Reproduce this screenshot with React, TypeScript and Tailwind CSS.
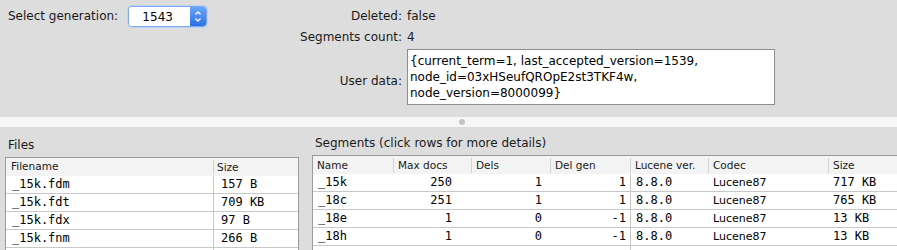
import React from "react";

const files = [
  ["_15k.fdm", "157 B"],
  ["_15k.fdt", "709 KB"],
  ["_15k.fdx", "97 B"],
  ["_15k.fnm", "266 B"],
  ["", ""],
];

const segments = [
  ["_15k", "250", "1", "1", "8.8.0", "Lucene87", "717 KB"],
  ["_18c", "251", "1", "1", "8.8.0", "Lucene87", "765 KB"],
  ["_18e", "1", "0", "-1", "8.8.0", "Lucene87", "13 KB"],
  ["_18h", "1", "0", "-1", "8.8.0", "Lucene87", "13 KB"],
  ["", "", "", "", "", "", ""],
];

const segCols = [
  { label: "Name", w: "w-[80px]" },
  { label: "Max docs", w: "w-[78px]" },
  { label: "Dels", w: "w-[79px]" },
  { label: "Del gen", w: "w-[80px]" },
  { label: "Lucene ver.", w: "w-[78px]" },
  { label: "Codec", w: "w-[120px]" },
  { label: "Size", w: "w-[80px]" },
];

function Spinner() {
  return (
    <div className="flex h-[21px] w-[79px] overflow-hidden rounded-[4px] border border-[#7fa9ea] shadow-[0_0_0_1px_#b9d2f5]">
      <div className="flex flex-1 items-center justify-center bg-white pr-1 text-[12px] text-black">1543</div>
      <div className="flex w-[16px] flex-col items-center justify-center bg-gradient-to-b from-[#6aa6fa] to-[#2b6fe6]">
        <svg width="8" height="13" viewBox="0 0 8 13" fill="none" stroke="white" strokeWidth="1.3">
          <path d="M1.5 4.5 L4 2 L6.5 4.5" />
          <path d="M1.5 8.5 L4 11 L6.5 8.5" />
        </svg>
      </div>
    </div>
  );
}

export default function App() {
  return (
    <div className="h-[250px] w-[897px] overflow-hidden bg-[#dddddd] font-['DejaVu_Sans',sans-serif] text-[12px] text-[#1a1a1a]">
      {/* Top: commit info */}
      <div className="flex h-[117px]">
        <div className="flex w-[220px] items-start gap-[10px] pl-2 pt-[6px]">
          <span className="leading-[21px]">Select generation:</span>
          <Spinner />
        </div>
        <div className="grid grid-cols-[182px_auto] content-start gap-x-[5px] pt-[8px]">
          <span className="h-4 text-right leading-4">Deleted:</span>
          <span className="h-4 leading-4">false</span>
          <span className="mt-[5px] h-4 text-right leading-4">Segments count:</span>
          <span className="mt-[5px] h-4 leading-4">4</span>
          <span className="mt-[4px] self-center pt-[8px] text-right leading-4">User data:</span>
          <div className="mt-[4px] h-[56px] w-[368px] border border-[#8e8e8e] bg-white px-[2px] pt-[3px] leading-4 text-black">
            <div>{"{current_term=1, last_accepted_version=1539,"}</div>
            <div>node_id=03xHSeufQROpE2st3TKF4w,</div>
            <div>node_version=8000099{"}"}</div>
          </div>
        </div>
      </div>

      {/* Split divider */}
      <div className="flex h-[10px] items-center bg-[#f6f6f6] pl-[459px]">
        <div className="h-[6px] w-[6px] rounded-full bg-[#c4c4c4]" />
      </div>

      {/* Bottom: files + segments */}
      <div className="flex">
        <div className="w-[312px] shrink-0 pl-[5px]">
          <div className="pb-[4px] pl-[3px] pt-[10px] leading-4">Files</div>
          <div className="w-[294px] border border-[#9c9c9c] bg-white">
            <div className="flex h-[18px] items-center bg-[#f3f3f3] text-[10.5px]">
              <div className="w-[207px] pl-[5px]">Filename</div>
              <div className="h-[15px] border-l border-[#d2d2d2] pl-[3px] leading-[15px]">Size</div>
            </div>
            {files.map(([name, size], i) => (
              <div key={i} className="flex h-[18px] border-b border-[#c8c8c8] font-['DejaVu_Sans_Mono',monospace] text-[12px] leading-[17px] text-black">
                <div className="w-[207px] pl-[6px]">{name}</div>
                <div className="flex-1 border-l border-[#c8c8c8] pl-[7px]">{size}</div>
              </div>
            ))}
          </div>
        </div>

        <div className="min-w-0 flex-1 overflow-hidden">
          <div className="pb-[4px] pl-[3px] pt-[8px] leading-4">Segments (click rows for more details)</div>
          <div className="w-[600px] border border-[#9c9c9c] bg-white">
            <div className="flex h-[18px] items-center bg-[#f3f3f3] text-[10.5px]">
              {segCols.map((c, i) => (
                <div key={c.label} className={`${c.w} h-[15px] leading-[15px] ${i > 0 ? "border-l border-[#d2d2d2] pl-[4px]" : "pl-[4px]"}`}>
                  {c.label}
                </div>
              ))}
            </div>
            {segments.map((r, i) => (
              <div key={i} className="flex h-[18px] border-b border-[#c8c8c8] font-['DejaVu_Sans_Mono',monospace] text-[12px] leading-[17px] text-black">
                <div className="w-[80px] pl-[5px]">{r[0]}</div>
                <div className="w-[78px] pr-[19px] text-right">{r[1]}</div>
                <div className="w-[79px] pr-[8px] text-right">{r[2]}</div>
                <div className="w-[80px] pr-[4px] text-right">{r[3]}</div>
                <div className="w-[78px] border-l border-[#c8c8c8] pl-[5px]">{r[4]}</div>
                <div className="w-[120px] pl-[5px] font-['DejaVu_Sans',sans-serif] text-[11px]">{r[5]}</div>
                <div className="w-[80px] pl-[5px]">{r[6]}</div>
              </div>
            ))}
          </div>
        </div>
      </div>
    </div>
  );
}
